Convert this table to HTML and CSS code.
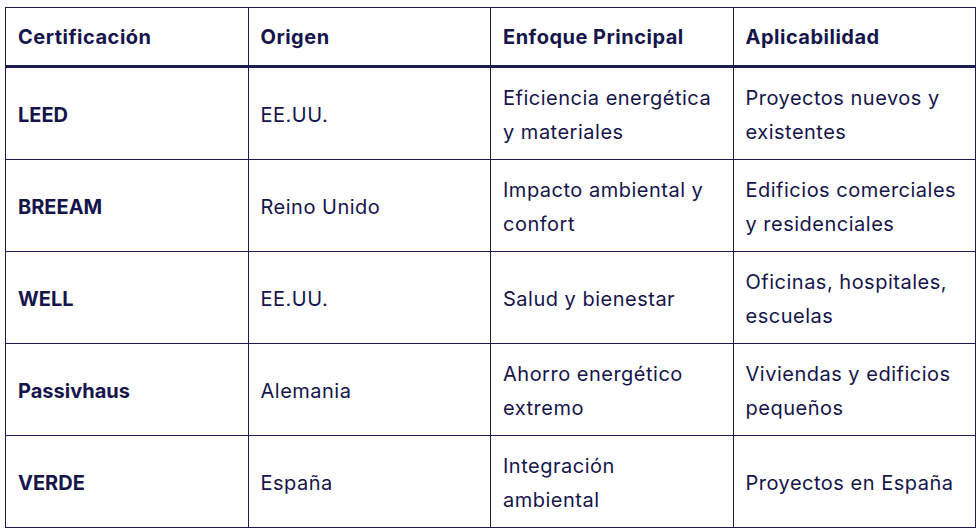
FILE: index.html
```html
<!DOCTYPE html>
<html lang="es">
<head>
<meta charset="utf-8">
<link rel="stylesheet" href="styles.css">
</head>
<body>
<table class="cert-table">
  <thead>
    <tr>
      <th>Certificación</th>
      <th>Origen</th>
      <th>Enfoque Principal</th>
      <th>Aplicabilidad</th>
    </tr>
  </thead>
  <tbody>
    <tr>
      <td class="name">LEED</td>
      <td>EE.UU.</td>
      <td>Eficiencia energética y materiales</td>
      <td>Proyectos nuevos y existentes</td>
    </tr>
    <tr>
      <td class="name">BREEAM</td>
      <td>Reino Unido</td>
      <td>Impacto ambiental y confort</td>
      <td>Edificios comerciales y residenciales</td>
    </tr>
    <tr>
      <td class="name">WELL</td>
      <td>EE.UU.</td>
      <td>Salud y bienestar</td>
      <td>Oficinas, hospitales, escuelas</td>
    </tr>
    <tr>
      <td class="name">Passivhaus</td>
      <td>Alemania</td>
      <td>Ahorro energético extremo</td>
      <td>Viviendas y edificios pequeños</td>
    </tr>
    <tr>
      <td class="name">VERDE</td>
      <td>España</td>
      <td>Integración ambiental</td>
      <td>Proyectos en España</td>
    </tr>
  </tbody>
</table>
</body>
</html>
```

FILE: styles.css
```css
html, body {
  margin: 0;
  padding: 0;
  background: #ffffff;
}
body {
  padding: 7px 5px 0 5px;
  font-family: Inter, "Liberation Sans", sans-serif;
  color: #15144b;
}
.cert-table {
  border-collapse: collapse;
  table-layout: fixed;
  width: 971px;
  font-size: 20px;
  line-height: 34px;
}
.cert-table th,
.cert-table td {
  border: 1px solid #1d1b50;
  padding: 0 17px 0 12px;
  text-align: left;
  vertical-align: middle;
}
.cert-table th {
  height: 57px;
  font-weight: 700;
  letter-spacing: 0.5px;
  border-bottom: 3px solid #1d1b50;
}
.cert-table td {
  height: 89px;
  padding-top: 2px;
  font-weight: 400;
  letter-spacing: 0.5px;
}
.cert-table td.name {
  font-weight: 700;
  letter-spacing: 0;
}
```
